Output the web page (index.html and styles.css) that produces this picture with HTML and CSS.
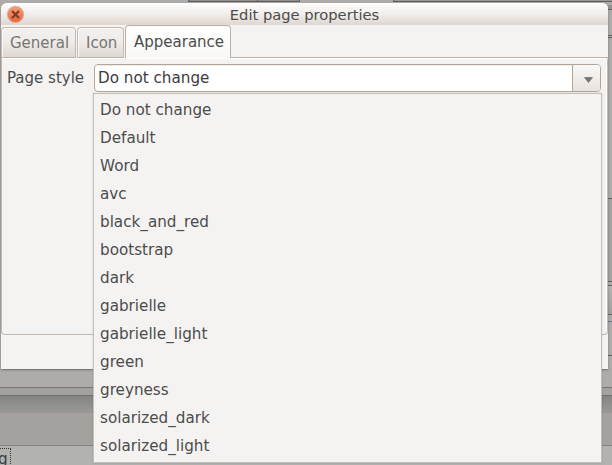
FILE: index.html
```html
<!DOCTYPE html>
<html lang="en">
<head>
<meta charset="utf-8">
<title>Edit page properties</title>
<link rel="stylesheet" href="styles.css">
</head>
<body>
<div class="desktop">
  <div class="back-top"><span class="back-tab first"></span><span class="back-tab second"></span><span class="back-line"></span></div>
  <div class="back-middle"><div class="back-side">
    <span class="side-a"></span><span class="side-b"></span><span class="side-c"></span><span class="side-d"></span><span class="side-e"></span><span class="side-f"></span><span class="side-g"></span><span class="side-h"></span><span class="side-i"></span>
  </div></div>
  <div class="back-status"></div>
  <div class="back-edge"></div>
  <div class="back-shadow"></div>
  <div class="back-panel"></div>
  <div class="back-foot"><span class="focus-label">g</span></div>
</div>
<div class="dialog">
  <header class="titlebar">
    <svg class="close" width="19" height="19" viewBox="0 0 19 19">
      <defs><linearGradient id="orange" x1="0" y1="0" x2="0" y2="1"><stop offset="0" stop-color="#f69c78"/><stop offset="1" stop-color="#ef6436"/></linearGradient></defs>
      <circle cx="9.5" cy="9.5" r="8.8" fill="#d3cbc5"/>
      <circle cx="9.5" cy="9.5" r="7.8" fill="url(#orange)" stroke="#d29a80" stroke-width=".6"/>
      <path d="M6 6l7 7M13 6l-7 7" stroke="#7c3c22" stroke-width="2.2"/>
    </svg>
    <h1>Edit page properties</h1>
  </header>
  <nav class="tabs">
    <div class="tab general">General</div>
    <div class="tab icon">Icon</div>
    <div class="tab active">Appearance</div>
    <div class="tab-rest"></div>
  </nav>
  <section class="pane">
    <div class="field">
      <label>Page style</label>
      <div class="combo">
        <span class="value">Do not change</span>
        <span class="arrow"><svg width="9" height="6" viewBox="0 0 9 6"><path d="M.5.5h8L4.5 5.5z" fill="#777471" stroke="#656360" stroke-width=".6"/></svg></span>
        <ul class="menu">
          <li>Do not change</li><li>Default</li><li>Word</li><li>avc</li><li>black_and_red</li><li>bootstrap</li><li>dark</li><li>gabrielle</li><li>gabrielle_light</li><li>green</li><li>greyness</li><li>solarized_dark</li><li>solarized_light</li>
        </ul>
      </div>
    </div>
  </section>
</div>
</body>
</html>
```
FILE: styles.css
```css
* { box-sizing: border-box; }
body {
  margin: 0;
  width: 612px;
  height: 465px;
  overflow: hidden;
  position: relative;
  font: 15.2px/20px "DejaVu Sans", sans-serif;
  color: #4c4c4c;
}
.desktop { display: flex; flex-direction: column; height: 465px; background: #adacab; }
.back-top { display: flex; height: 5px; flex: none; }
.back-tab { flex: none; height: 2px; border-right: 1px solid #5f5e5c; border-bottom: 1px solid #5f5e5c; background: #91908e; }
.back-tab.first { margin-left: 188px; width: 70px; border-left: 2px solid #62758c; }
.back-tab.second { width: 42px; }
.back-line { margin-left: 93px; flex: 1; height: 2px; border-bottom: 1px solid #5f5e5c; border-left: 1px solid #666; background: #9b9a98; }
.back-middle { height: 383px; flex: none; border-bottom: 1px solid #777674; display: flex; justify-content: flex-end; }
.back-side { width: 4px; display: flex; flex-direction: column; }
.back-side span { flex: none; border-bottom: 1px solid #5f5e5c; }
.side-a { height: 5px; background: #92918f; }
.side-b { height: 26px; }
.side-c { height: 2px; }
.side-d { height: 161px; }
.side-e { height: 83px; background: #a4a19e; }
.side-f { height: 4px; }
.side-g { height: 29px; background: linear-gradient(#b5b4b2, #9f9e9b); }
.back-side .side-h { height: 7px; border-color: #65768d; }
.side-i { height: 34px; }
.back-status { height: 7px; background: #a3a2a0; flex: none; }
.back-edge { height: 1px; background: #71706e; flex: none; }
.back-shadow { height: 17px; background: linear-gradient(#858583, #999997); flex: none; }
.back-panel { height: 32px; background: #a5a19e; flex: none; }
.back-foot { flex: 1; background: #b2b2b1; border-top: 1px solid #858482; }
.focus-label {
  display: block;
  width: 11px;
  height: 22px;
  margin-top: 2px;
  border: 1px dotted #333;
  border-width: 1px 1px 0 0;
  text-indent: -2px;
  line-height: 20px;
  color: #3a3a3a;
}
.dialog {
  position: absolute;
  left: 1px;
  top: 3px;
  width: 607px;
  height: 366px;
  background: #f4f3f2;
  border-radius: 6px 6px 0 0;
  box-shadow: 0 1px 2px #6e6c6a;
}
.titlebar {
  height: 22px;
  border-top: 1px solid #fff;
  border-radius: 6px 6px 0 0;
  background: linear-gradient(#fdfcfc, #f2efec 45%, #dfd6cf);
  display: flex;
  align-items: center;
}
.close { margin: -1px 0 0 5px; flex: none; }
h1 { margin: 0 24px 0 0; flex: 1; font-size: 14.7px; line-height: 20px; font-weight: normal; text-align: center; }
.tabs { display: flex; align-items: flex-end; height: 33px; font-size: 15px; }
.tab {
  height: 31px;
  border: 1px solid #c5bbb2;
  border-bottom-color: #bfb1a6;
  border-radius: 4px 4px 0 0;
  background: linear-gradient(#f3f2f0, #eeebe9 50%, #ded8d2);
  box-shadow: inset 1px 1px #faf9f8;
  color: #777573;
  padding: 5px 0 0 8px;
  margin-right: 1px;
}
.general { width: 75px; }
.icon { width: 47px; }
.tab.active {
  width: 106px;
  height: 33px;
  margin: 0;
  background: linear-gradient(#fff, #f9f8f7);
  border-color: #bfb1a6;
  border-bottom: 0;
  color: #4c4c4c;
  padding-top: 6px;
}
.tab-rest { flex: 1; height: 1px; background: #bfb1a6; }
.pane {
  height: 277px;
  border: 1px solid #c4b8ae;
  border-top: 0;
  border-radius: 0 3px 4px 4px;
  box-shadow: inset -1px 1px #fff;
  padding: 6px 5px 0;
}
.field { display: flex; align-items: center; }
.field label { width: 87px; flex: none; font-size: 15px; }
.combo {
  position: relative;
  width: 507px;
  height: 28px;
  flex: none;
  display: flex;
  border: 1px solid #b3a699;
  border-radius: 4px;
  background: #fff;
}
.value { flex: 1; padding: 3px 0 0 3px; color: #3c3c3c; box-shadow: inset 0 1px #eeeae6; border-radius: 3px 0 0 3px; }
.arrow {
  width: 28px;
  border-left: 1px solid #b3a699;
  border-radius: 0 3px 3px 0;
  background: linear-gradient(#f9f8f7, #e8e3de);
  display: flex;
  align-items: center;
  justify-content: center;
  padding: 4px 0 0 4px;
}
.menu {
  position: absolute;
  left: -2px;
  top: 28px;
  width: 509px;
  height: 370px;
  margin: 0;
  padding: 2px 0 0 6px;
  list-style: none;
  border: 1px solid #c7beb6;
  background: #f4f3f2;
  box-shadow: 0 0 2px rgba(0, 0, 0, .15);
}
.menu li { height: 28px; line-height: 28px; }
```
